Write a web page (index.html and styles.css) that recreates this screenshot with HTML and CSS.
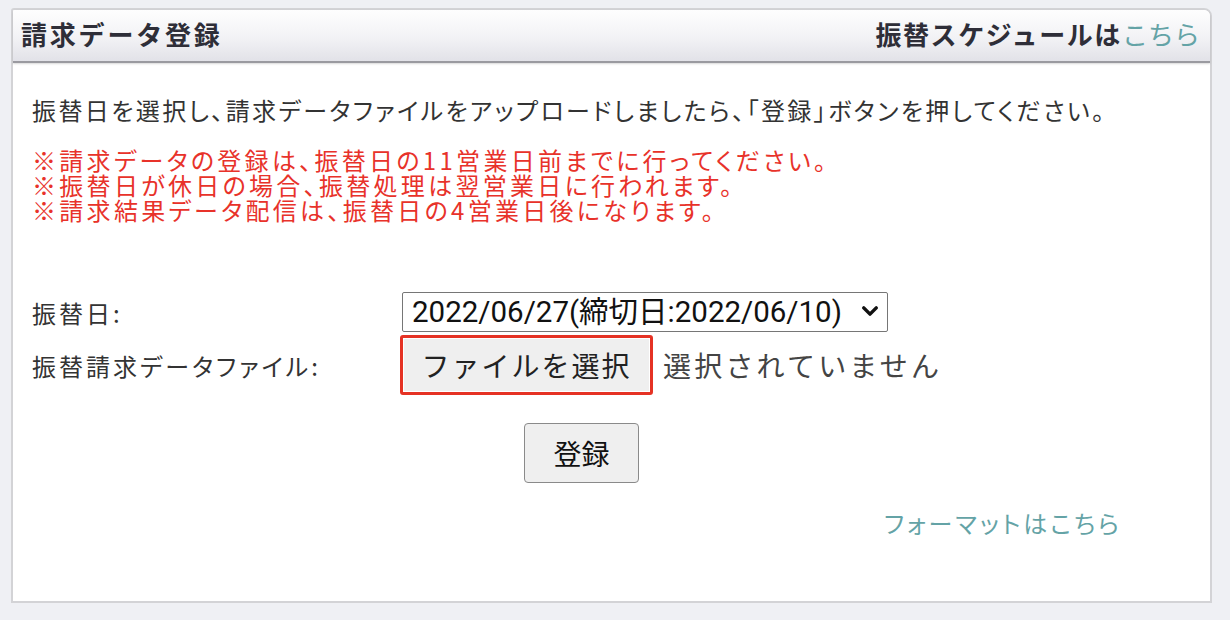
FILE: index.html
```html
<!DOCTYPE html>
<html lang="ja">
<head>
<meta charset="utf-8">
<title>請求データ登録</title>
<link rel="stylesheet" href="styles.css">
</head>
<body>
<div class="panel">
  <div class="panel-head">
    <h2 class="panel-title">請求データ登録</h2>
    <div class="head-link">振替スケジュールは<a href="#" class="link">こちら</a></div>
  </div>
  <div class="panel-body">
    <p class="intro">振替日を選択し、請求データファイルをアップロードしましたら、「登録」ボタンを押してください。</p>
    <div class="notes">
      <div class="note">※請求データの登録は、振替日の11営業日前までに行ってください。</div>
      <div class="note">※振替日が休日の場合、振替処理は翌営業日に行われます。</div>
      <div class="note">※請求結果データ配信は、振替日の4営業日後になります。</div>
    </div>
    <div class="form-grid">
      <div class="label">振替日:</div>
      <div class="control">
        <span class="select-wrap">
          <select class="date-select">
            <option>2022/06/27(締切日:2022/06/10)</option>
          </select>
          <svg class="chevron" viewBox="0 0 16 16" width="20" height="20"><path d="M3 5.5 L8 10.5 L13 5.5" fill="none" stroke="#111" stroke-width="2.8" stroke-linecap="round" stroke-linejoin="round"/></svg>
        </span>
      </div>
      <div class="label">振替請求データファイル:</div>
      <div class="control file-control">
        <span class="highlight"><button class="file-btn" type="button">ファイルを選択</button></span>
        <span class="file-status">選択されていません</span>
      </div>
    </div>
    <div class="actions"><button class="submit-btn" type="button">登録</button></div>
    <div class="format"><a href="#" class="link format-link">フォーマットはこちら</a></div>
  </div>
</div>
</body>
</html>
```
FILE: styles.css
```css
html, body {
  margin: 0;
  background: #eff0f4;
}
body {
  padding: 8px 0 0 11px;
  font-family: "Noto Sans CJK JP", "Noto Sans", sans-serif;
  color: #333;
}
.panel {
  box-sizing: border-box;
  width: 1201px;
  height: 595px;
  background: #fff;
  border: 2px solid #d3d3d6;
  border-top-right-radius: 8px;
  border-top-left-radius: 3px;
}
.panel-head {
  display: flex;
  justify-content: space-between;
  align-items: center;
  height: 51px;
  padding: 0 10px 0 8px;
  background: linear-gradient(#fefefe, #f2f2f5 55%, #e2e2e8);
  border-bottom: 2px solid #9a9aa0;
  box-shadow: 0 1px 2px rgba(0,0,0,0.15);
  border-top-right-radius: 6px;
  border-top-left-radius: 2px;
}
.panel-title {
  margin: 0;
  font-size: 26px;
  font-weight: 700;
  color: #2e2e38;
  letter-spacing: 2.8px;
  margin-top: -4px;
}
.head-link {
  font-size: 26px;
  font-weight: 700;
  color: #2e2e38;
  letter-spacing: 1.6px;
  margin-top: -4px;
}
.head-link .link {
  font-weight: 400;
  letter-spacing: 0;
}
.link {
  color: #64a3a6;
  text-decoration: none;
}
.panel-body {
  padding: 0 0 0 19px;
}
.intro {
  margin: 32px 0 0;
  font-size: 24px;
  line-height: 30px;
  font-feature-settings: "palt";
  letter-spacing: 2.4px;
  color: #333;
}
.notes {
  margin: 22px 0 0;
  color: #e8322a;
}
.note {
  height: 25px;
  font-size: 24px;
  line-height: 25px;
  font-feature-settings: "palt";
  letter-spacing: 3.3px;
  white-space: nowrap;
}
.form-grid {
  display: grid;
  grid-template-columns: 368px auto;
  row-gap: 3px;
  margin-top: 70px;
  align-items: center;
}
.label {
  font-size: 24px;
  color: #333;
  font-feature-settings: "palt";
  letter-spacing: 3px;
}
.control {
  display: flex;
  align-items: center;
}
.select-wrap {
  position: relative;
  display: inline-block;
  margin-left: 2px;
}
.date-select {
  appearance: none;
  -webkit-appearance: none;
  box-sizing: border-box;
  width: 486px;
  height: 40px;
  padding: 0 0 0 9px;
  border: 1px solid #767676;
  border-radius: 2px;
  background: #fff;
  font-family: "Roboto", "Noto Sans CJK JP", sans-serif;
  font-size: 29.5px;
  color: #111;
}
.chevron {
  position: absolute;
  right: 8px;
  top: 9px;
}
.highlight {
  display: inline-flex;
  padding: 1px;
  border: 3px solid #e53224;
  border-radius: 3px;
}
.file-btn {
  box-sizing: border-box;
  width: 245px;
  height: 52px;
  border: none;
  background: #efefef;
  font-family: "Noto Sans CJK JP", sans-serif;
  font-size: 28px;
  color: #222;
  padding: 0;
  letter-spacing: 2px;
}
.file-status {
  margin-left: 10px;
  font-size: 28px;
  color: #444;
  letter-spacing: 3.2px;
}
.actions {
  margin: 28px 0 0 492px;
}
.submit-btn {
  box-sizing: border-box;
  width: 115px;
  height: 60px;
  border: 1px solid #8a8a8a;
  border-radius: 4px;
  background: #efefef;
  font-family: "Noto Sans CJK JP", sans-serif;
  font-size: 28px;
  color: #111;
  padding: 0;
}
.format {
  margin-top: 25px;
  padding-right: 88px;
  text-align: right;
  line-height: 30px;
}
.format-link {
  font-size: 24px;
  font-feature-settings: "palt";
  letter-spacing: 3px;
}
```
